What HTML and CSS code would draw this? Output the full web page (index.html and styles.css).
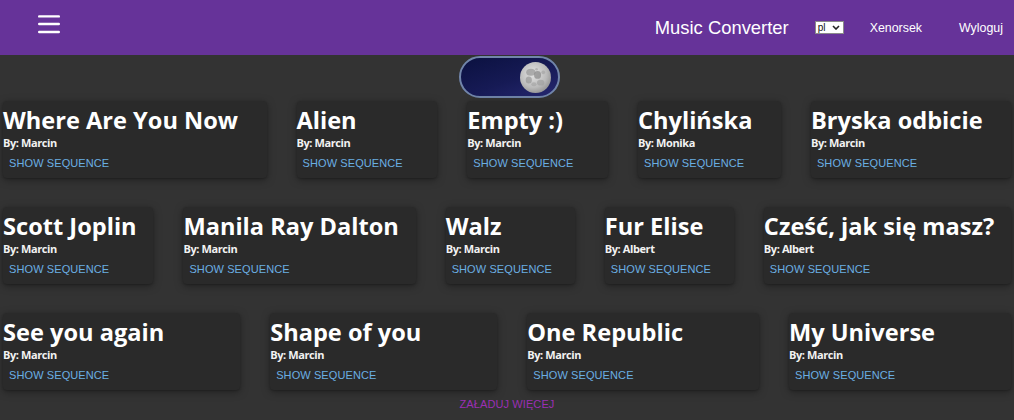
FILE: index.html
```html
<!DOCTYPE html>
<html lang="pl">
<head>
<meta charset="utf-8">
<title>Music Converter</title>
<link rel="stylesheet" href="styles.css">
</head>
<body>
<header class="topbar">
  <button class="menu-btn" aria-label="menu">
    <svg width="22" height="20" viewBox="0 0 22 20">
      <rect x="0" y="0.2" width="22" height="2.4" rx="1.2" fill="#fff"/>
      <rect x="0" y="7.8" width="22" height="2.4" rx="1.2" fill="#fff"/>
      <rect x="0" y="15.8" width="22" height="2.4" rx="1.2" fill="#fff"/>
    </svg>
  </button>
  <span class="brand">Music Converter</span>
  <span class="lang">pl
    <svg width="8" height="5" viewBox="0 0 8 5"><path d="M1 1 L4 4 L7 1" fill="none" stroke="#222" stroke-width="1.6"/></svg>
  </span>
  <a class="nav-link user">Xenorsek</a>
  <a class="nav-link">Wyloguj</a>
</header>
<main class="page">
  <div class="theme-row">
    <div class="theme-toggle">
      <svg class="moon" width="31" height="31" viewBox="0 0 30 30">
        <defs>
          <radialGradient id="mg" cx="42%" cy="38%" r="68%">
            <stop offset="0" stop-color="#e4e4e4"/>
            <stop offset="0.65" stop-color="#bababa"/>
            <stop offset="1" stop-color="#8f8f8f"/>
          </radialGradient>
        </defs>
        <circle cx="15" cy="15" r="15" fill="url(#mg)"/>
        <ellipse cx="10.5" cy="10" rx="4.5" ry="3.4" fill="#9a9a9a" opacity="0.75"/>
        <ellipse cx="17" cy="12.5" rx="3.4" ry="3.8" fill="#888" opacity="0.7"/>
        <ellipse cx="8.5" cy="17.5" rx="3" ry="3.4" fill="#939393" opacity="0.65"/>
        <ellipse cx="20" cy="20" rx="3.6" ry="2.8" fill="#9c9c9c" opacity="0.65"/>
        <ellipse cx="13.5" cy="21.5" rx="2.6" ry="2" fill="#a2a2a2" opacity="0.6"/>
        <circle cx="22.5" cy="10" r="1.8" fill="#a5a5a5" opacity="0.7"/>
        <circle cx="16" cy="7" r="1.3" fill="#a0a0a0" opacity="0.6"/>
      </svg>
    </div>
  </div>

  <section class="songs">
    <article class="song-card"><div class="song-title">Where Are You Now</div><div class="song-author">By: Marcin</div><button class="seq-btn">Show sequence</button></article>
    <article class="song-card"><div class="song-title">Alien</div><div class="song-author">By: Marcin</div><button class="seq-btn">Show sequence</button></article>
    <article class="song-card"><div class="song-title">Empty :)</div><div class="song-author">By: Marcin</div><button class="seq-btn">Show sequence</button></article>
    <article class="song-card"><div class="song-title">Chylińska</div><div class="song-author">By: Monika</div><button class="seq-btn">Show sequence</button></article>
    <article class="song-card"><div class="song-title">Bryska odbicie</div><div class="song-author">By: Marcin</div><button class="seq-btn">Show sequence</button></article>

    <article class="song-card"><div class="song-title">Scott Joplin</div><div class="song-author">By: Marcin</div><button class="seq-btn">Show sequence</button></article>
    <article class="song-card"><div class="song-title">Manila Ray Dalton</div><div class="song-author">By: Marcin</div><button class="seq-btn">Show sequence</button></article>
    <article class="song-card"><div class="song-title">Walz</div><div class="song-author">By: Marcin</div><button class="seq-btn">Show sequence</button></article>
    <article class="song-card"><div class="song-title">Fur Elise</div><div class="song-author">By: Albert</div><button class="seq-btn">Show sequence</button></article>
    <article class="song-card"><div class="song-title">Cześć, jak się masz?</div><div class="song-author">By: Albert</div><button class="seq-btn">Show sequence</button></article>

    <article class="song-card"><div class="song-title">See you again</div><div class="song-author">By: Marcin</div><button class="seq-btn">Show sequence</button></article>
    <article class="song-card"><div class="song-title">Shape of you</div><div class="song-author">By: Marcin</div><button class="seq-btn">Show sequence</button></article>
    <article class="song-card"><div class="song-title">One Republic</div><div class="song-author">By: Marcin</div><button class="seq-btn">Show sequence</button></article>
    <article class="song-card"><div class="song-title">My Universe</div><div class="song-author">By: Marcin</div><button class="seq-btn">Show sequence</button></article>
  </section>

  <div class="more-row"><button class="more-btn">Załaduj więcej</button></div>
</main>
</body>
</html>
```

FILE: styles.css
```css
* { box-sizing: border-box; }

html, body {
  margin: 0;
  padding: 0;
  background: #333333;
  overflow: hidden;
}

body {
  font-family: "Liberation Sans", Arial, sans-serif;
  color: #fff;
}

.topbar {
  height: 55px;
  background: #663399;
  display: flex;
  align-items: center;
  padding: 0 11px 0 38px;
}

.menu-btn {
  background: none;
  border: 0;
  padding: 0;
  margin: 0 auto 5px 0;
  display: flex;
  cursor: pointer;
}

.brand {
  font-size: 18.4px;
  color: #fff;
  margin-right: 26px;
}

.lang {
  display: inline-flex;
  align-items: center;
  justify-content: space-between;
  width: 29px;
  height: 13px;
  background: #fff;
  border: 1px solid #8a8a8a;
  color: #111;
  font-size: 10px;
  line-height: 11px;
  padding: 0 3px 0 2px;
  margin-right: 26px;
}

.nav-link {
  font-size: 12.4px;
  color: #fff;
  text-decoration: none;
}

.nav-link.user { margin-right: 37px; }

.page {
  display: flex;
  flex-direction: column;
}

.theme-row {
  display: flex;
  justify-content: center;
  padding-left: 5px;
  margin-top: 1px;
  margin-bottom: 3px;
}

.theme-toggle {
  width: 101px;
  height: 42px;
  border-radius: 21px;
  border: 2px solid #7185aa;
  background: linear-gradient(160deg, #0b1140 0%, #161a55 55%, #262870 100%);
  display: flex;
  align-items: center;
  justify-content: flex-end;
  padding-right: 7px;
}

.moon { display: block; }

.songs {
  display: flex;
  flex-wrap: wrap;
  column-gap: 30px;
  row-gap: 29px;
  padding: 0 3px;
}

.song-card {
  flex: 1 1 auto;
  height: 77px;
  background: #2a2a2a;
  border-radius: 4px;
  box-shadow: 0 2px 8px rgba(0, 0, 0, 0.35), 0 1px 2px rgba(0, 0, 0, 0.2);
  padding: 4px 0 0 0;
  display: flex;
  flex-direction: column;
  align-items: flex-start;
}

.song-title {
  font-family: "Open Sans", "Noto Sans", sans-serif;
  font-weight: 700;
  font-size: 23.6px;
  line-height: 30px;
  white-space: nowrap;
  color: #fff;
}

.song-author {
  font-family: "Open Sans", "Noto Sans", sans-serif;
  font-weight: 700;
  font-size: 11px;
  line-height: 14px;
  margin-top: 1px;
  letter-spacing: -0.4px;
  color: #f2f2f2;
}

.seq-btn,
.more-btn {
  font-family: "Liberation Sans", Arial, sans-serif;
  font-size: 11px;
  line-height: 13px;
  text-transform: uppercase;
  letter-spacing: 0.1px;
  background: none;
  border: 0;
  padding: 4px 6px;
  cursor: pointer;
  white-space: nowrap;
}

.seq-btn {
  color: #6aafe3;
  margin-top: 3px;
}

.more-row {
  display: flex;
  justify-content: center;
  margin-top: 4px;
}

.more-btn {
  color: #9b2fb3;
}
```
